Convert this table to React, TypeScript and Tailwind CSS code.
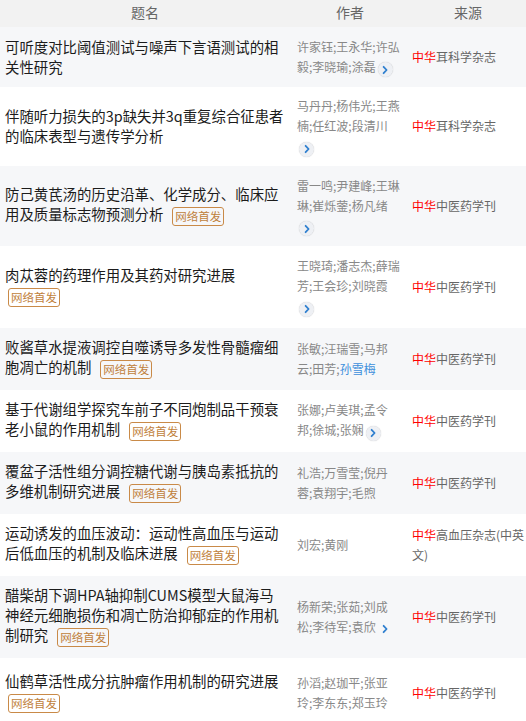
import React from "react";

type Row = {
  title: string[];
  badge: "none" | "inline" | "newline";
  authors: string[];
  blueLast?: string;
  arrow: "none" | "inline" | "block" | "plain";
  source: string[];
  minH?: string;
};

const rows: Row[] = [
  {
    title: ["可听度对比阈值测试与噪声下言语测试的相", "关性研究"],
    badge: "none",
    authors: ["许家钰;王永华;许弘", "毅;李晓瑜;涂磊"],
    arrow: "inline",
    source: ["耳科学杂志"],
  },
  {
    title: ["伴随听力损失的3p缺失并3q重复综合征患者", "的临床表型与遗传学分析"],
    badge: "none",
    authors: ["马丹丹;杨伟光;王燕", "楠;任红波;段清川"],
    arrow: "block",
    source: ["耳科学杂志"],
  },
  {
    title: ["防己黄芪汤的历史沿革、化学成分、临床应", "用及质量标志物预测分析"],
    badge: "inline",
    authors: ["雷一鸣;尹建峰;王琳", "琳;崔烁蓥;杨凡绪"],
    arrow: "block",
    source: ["中医药学刊"],
  },
  {
    title: ["肉苁蓉的药理作用及其药对研究进展"],
    badge: "newline",
    authors: ["王晓琦;潘志杰;薛瑞", "芳;王会珍;刘晓霞"],
    arrow: "block",
    source: ["中医药学刊"],
    minH: "min-h-[82px]",
  },
  {
    title: ["败酱草水提液调控自噬诱导多发性骨髓瘤细", "胞凋亡的机制"],
    badge: "inline",
    authors: ["张敏;汪瑞雪;马邦", "云;田芳;"],
    blueLast: "孙雪梅",
    arrow: "none",
    source: ["中医药学刊"],
  },
  {
    title: ["基于代谢组学探究车前子不同炮制品干预衰", "老小鼠的作用机制"],
    badge: "inline",
    authors: ["张娜;卢美琪;孟令", "邦;徐城;张娴"],
    arrow: "inline",
    source: ["中医药学刊"],
  },
  {
    title: ["覆盆子活性组分调控糖代谢与胰岛素抵抗的", "多维机制研究进展"],
    badge: "inline",
    authors: ["礼浩;万雪莹;倪丹", "蓉;袁翔宇;毛煦"],
    arrow: "none",
    source: ["中医药学刊"],
  },
  {
    title: ["运动诱发的血压波动：运动性高血压与运动", "后低血压的机制及临床进展"],
    badge: "inline",
    authors: ["刘宏;黄刚"],
    arrow: "none",
    source: ["高血压杂志(中英", "文)"],
  },
  {
    title: [
      "醋柴胡下调HPA轴抑制CUMS模型大鼠海马",
      "神经元细胞损伤和凋亡防治抑郁症的作用机",
      "制研究",
    ],
    badge: "inline",
    authors: ["杨新荣;张茹;刘成", "松;李待军;袁欣"],
    arrow: "plain",
    source: ["中医药学刊"],
  },
  {
    title: ["仙鹤草活性成分抗肿瘤作用机制的研究进展"],
    badge: "newline",
    authors: ["孙滔;赵珈平;张亚", "玲;李东东;郑玉玲"],
    arrow: "none",
    source: ["中医药学刊"],
    minH: "min-h-[70px]",
  },
];

function Chevron() {
  return (
    <svg width="10" height="10" viewBox="0 0 10 10" className="block">
      <path d="M3.6 1.8 L6.6 5 L3.6 8.2" fill="none" stroke="#2f7fcf" strokeWidth="1.8" strokeLinecap="round" strokeLinejoin="round" />
    </svg>
  );
}

function Arrow({ plain }: { plain?: boolean }) {
  if (plain) {
    return (
      <span className="ml-[2px] inline-flex h-[14px] w-[14px] items-center justify-center align-[-2px]">
        <Chevron />
      </span>
    );
  }
  return (
    <span className="ml-[2px] inline-flex h-[15px] w-[15px] items-center justify-center rounded-full bg-[#eef0f4] shadow-[0_0_1px_rgba(0,0,0,0.25)] align-[-3px]">
      <Chevron />
    </span>
  );
}

function Badge({ first }: { first?: boolean }) {
  return (
    <span
      className={`${first ? "ml-[3px]" : "ml-[9px]"} my-[1.5px] inline-block h-[19px] rounded-[3px] border border-[#c98a48] px-[2px] align-middle text-[11.5px] leading-[17px] text-[#bf7f3c]`}
    >
      网络首发
    </span>
  );
}

export default function App() {
  return (
    <div className="w-[526px] bg-white font-['Noto_Sans_CJK_SC','Microsoft_YaHei',sans-serif]">
      <div className="grid h-[27px] grid-cols-[290px_120px_116px] items-center bg-[#f2f2f2] pb-[3px] text-[14px] leading-[20px] text-[#666]">
        <div className="text-center">题名</div>
        <div className="text-center">作者</div>
        <div className="text-center">来源</div>
      </div>
      {rows.map((r, i) => (
        <div
          key={i}
          className={`grid grid-cols-[290px_120px_116px] items-center py-[9.5px] ${r.minH ?? ""} ${i % 2 === 0 ? "bg-[#f6f7f9]" : "bg-white"}`}
        >
          <div className="whitespace-nowrap pl-[5px] text-[14.4px] leading-[20px] text-[#1c1c1c]">
            {r.title.map((t, j) => (
              <React.Fragment key={j}>
                {j > 0 && <br />}
                {t}
                {j === r.title.length - 1 && r.badge === "inline" && <Badge />}
              </React.Fragment>
            ))}
            {r.badge === "newline" && (
              <>
                <br />
                <Badge first />
              </>
            )}
          </div>
          <div className="whitespace-nowrap pl-[7px] text-[12px] leading-[20px] text-[#888]">
            {r.authors.map((a, j) => (
              <React.Fragment key={j}>
                {j > 0 && <br />}
                {a}
                {j === r.authors.length - 1 && r.blueLast && <span className="text-[#3d8fdc]">{r.blueLast}</span>}
                {j === r.authors.length - 1 && r.arrow === "inline" && <Arrow />}
                {j === r.authors.length - 1 && r.arrow === "plain" && <Arrow plain />}
              </React.Fragment>
            ))}
            {r.arrow === "block" && (
              <>
                <br />
                <Arrow />
              </>
            )}
          </div>
          <div className="whitespace-nowrap pl-[2px] text-[12px] leading-[20px] text-[#666]">
            {r.source.map((s, j) => (
              <React.Fragment key={j}>
                {j > 0 && <br />}
                {j === 0 && <span className="text-[#f00]">中华</span>}
                {s}
              </React.Fragment>
            ))}
          </div>
        </div>
      ))}
    </div>
  );
}
